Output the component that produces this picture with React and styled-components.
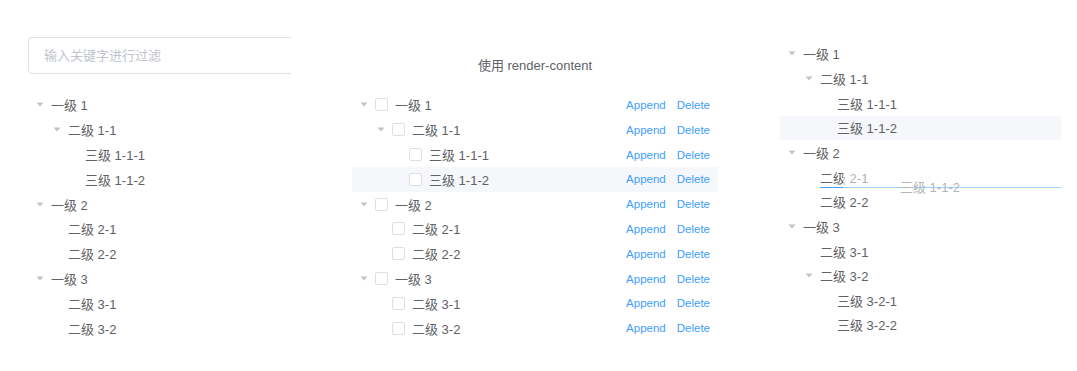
import React from "react"
import styled, { createGlobalStyle } from "styled-components"

const GlobalStyle = createGlobalStyle`
  body {
    margin: 0;
    background: #fff;
    font-family: "Liberation Sans", "Noto Sans CJK SC", sans-serif;
    color: #606266;
  }
`

const Page = styled.div`
  display: flex;
  align-items: flex-start;
  padding-left: 28px;
  width: 1077px;
  height: 371px;
  box-sizing: border-box;
  overflow: hidden;
`

const Column = styled.div`
  width: ${(p) => p.$width}px;
  margin-right: ${(p) => p.$gap || 0}px;
  padding-top: ${(p) => p.$top}px;
  overflow: hidden;
  flex-shrink: 0;
`

const FilterInput = styled.input`
  display: block;
  width: 320px;
  height: 37px;
  box-sizing: border-box;
  border: 1px solid #dcdfe6;
  border-radius: 4px;
  padding: 0 15px;
  font-family: "Liberation Sans", "Noto Sans CJK SC", sans-serif;
  font-size: 13px;
  color: #606266;
  outline: none;

  &::placeholder {
    color: #c0c4cc;
  }
`

const Title = styled.div`
  text-align: center;
  font-size: 13px;
  line-height: 20px;
  color: #606266;
  padding-top: 1px;
`

const TreeBox = styled.div`
  position: relative;
  margin-top: ${(p) => p.$mt || 0}px;
`

const Row = styled.div`
  display: flex;
  align-items: center;
  height: ${(p) => p.$h}px;
  padding-left: ${(p) => p.$indent}px;
  padding-right: 8px;
  background: ${(p) => (p.$active ? "#f5f7fa" : "transparent")};
  font-size: 13px;
  color: #606266;
  white-space: nowrap;
`

const Caret = styled.span`
  width: 23px;
  flex-shrink: 0;
  display: flex;
  justify-content: center;
  align-items: center;
  visibility: ${(p) => (p.$leaf ? "hidden" : "visible")};
`

const Check = styled.span`
  width: 13px;
  height: 13px;
  box-sizing: border-box;
  border: 1px solid #dcdfe6;
  border-radius: 2px;
  background: #fff;
  margin-right: 7px;
  flex-shrink: 0;
`

const Label = styled.span`
  flex: 1;
`

const Actions = styled.span`
  display: flex;
  gap: 11px;
  font-size: 11.5px;
  color: #409eff;
`

const DropLine = styled.div`
  position: absolute;
  left: 40px;
  right: 0;
  top: 145px;
  height: 1px;
  background: #409eff;
`

const Ghost = styled.div`
  position: absolute;
  left: 63px;
  right: 0;
  top: 124px;
  height: 30px;
  box-sizing: border-box;
  padding: 14px 0 0 57px;
  background: rgba(255, 255, 255, 0.5);
  font-size: 13px;
  line-height: 16px;
  color: #b4b5b8;
  white-space: nowrap;
`

const treeA = [
  {
    label: "一级 1",
    children: [
      {
        label: "二级 1-1",
        children: [{ label: "三级 1-1-1" }, { label: "三级 1-1-2", active: true }],
      },
    ],
  },
  { label: "一级 2", children: [{ label: "二级 2-1" }, { label: "二级 2-2" }] },
  { label: "一级 3", children: [{ label: "二级 3-1" }, { label: "二级 3-2" }] },
]

const treeB = [
  {
    label: "一级 1",
    children: [
      {
        label: "二级 1-1",
        children: [{ label: "三级 1-1-1" }, { label: "三级 1-1-2", active: true }],
      },
    ],
  },
  { label: "一级 2", children: [{ label: "二级 2-1" }, { label: "二级 2-2" }] },
  {
    label: "一级 3",
    children: [
      { label: "二级 3-1" },
      {
        label: "二级 3-2",
        children: [{ label: "三级 3-2-1" }, { label: "三级 3-2-2" }],
      },
    ],
  },
]

function CaretDown() {
  return (
    <svg width="8" height="5" viewBox="0 0 8 5">
      <path d="M0.5 0.5 L7.5 0.5 L4 4.5 Z" fill="#c0c4cc" />
    </svg>
  )
}

function flatten(nodes, level = 0, out = []) {
  nodes.forEach((n) => {
    out.push({ ...n, level })
    if (n.children) flatten(n.children, level + 1, out)
  })
  return out
}

function Tree({ data, rowH, showActive, checkable, actions }) {
  return flatten(data).map((n, i) => (
    <Row key={i} $h={rowH} $indent={n.level * 17} $active={showActive && n.active}>
      <Caret $leaf={!n.children}>
        <CaretDown />
      </Caret>
      {checkable && <Check />}
      <Label>{n.label}</Label>
      {actions && (
        <Actions>
          <span>Append</span>
          <span>Delete</span>
        </Actions>
      )}
    </Row>
  ))
}

export default function App() {
  return (
    <>
      <GlobalStyle />
      <Page>
        <Column $width={263} $gap={61} $top={37}>
          <FilterInput placeholder="输入关键字进行过滤" />
          <TreeBox $mt={18.6}>
            <Tree data={treeA} rowH={24.8} />
          </TreeBox>
        </Column>
        <Column $width={366} $gap={62} $top={55}>
          <Title>使用 render-content</Title>
          <TreeBox $mt={16.6}>
            <Tree data={treeA} rowH={24.8} showActive checkable actions />
          </TreeBox>
        </Column>
        <Column $width={281} $top={41.6}>
          <TreeBox>
            <Tree data={treeB} rowH={24.65} showActive />
            <DropLine />
            <Ghost>三级 1-1-2</Ghost>
          </TreeBox>
        </Column>
      </Page>
    </>
  )
}
